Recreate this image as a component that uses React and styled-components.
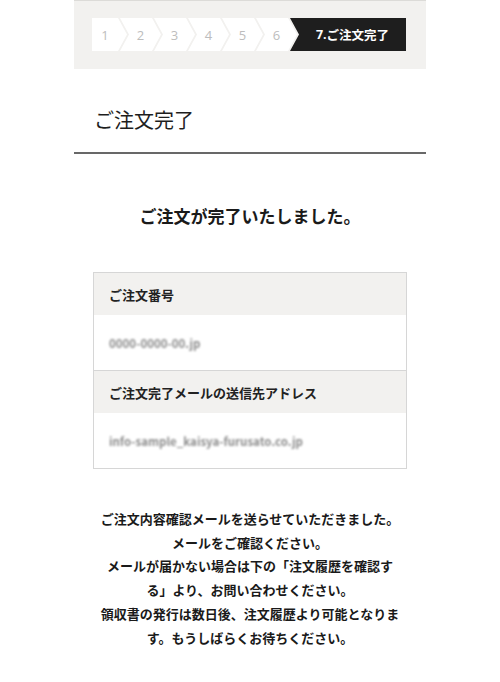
import React from 'react';
import styled, { createGlobalStyle } from 'styled-components';

const GlobalStyle = createGlobalStyle`
	body {
		margin: 0;
		background: #fff;
		font-family: "Noto Sans CJK JP", "Noto Sans", sans-serif;
		color: #222;
	}
`;

const Page = styled.main`
	width: 352px;
	margin: 0 auto;
	padding-bottom: 30px;
`;

const StepPanel = styled.nav`
	height: 69px;
	box-sizing: border-box;
	background: #f2f1ef;
	border-top: 1px solid #dcdbd8;
	padding: 17px 0 0 18px;
`;

const StepList = styled.ol`
	display: flex;
	margin: 0;
	padding: 0;
	list-style: none;
	height: 33px;
`;

const Step = styled.li`
	display: flex;
	align-items: center;
	justify-content: center;
	box-sizing: border-box;
	height: 100%;
	width: ${p => (p.$first ? 35 : p.$current ? 116 : 41)}px;
	margin-left: ${p => (p.$first ? 0 : -7)}px;
	padding: 0 ${p => (p.$current ? 0 : 9)}px 0 ${p => (p.$first ? 0 : 9)}px;
	background: ${p => (p.$current ? '#1e1e1e' : '#fff')};
	color: ${p => (p.$current ? '#fff' : '#bdbdbd')};
	font-family: "Open Sans", "Noto Sans CJK JP", sans-serif;
	font-size: ${p => (p.$current ? 12.5 : 13)}px;
	font-weight: ${p => (p.$current ? 700 : 400)};
	clip-path: ${p =>
		p.$first
			? 'polygon(0 0, calc(100% - 9px) 0, 100% 50%, calc(100% - 9px) 100%, 0 100%)'
			: p.$current
			? 'polygon(0 0, 100% 0, 100% 100%, 0 100%, 9px 50%)'
			: 'polygon(0 0, calc(100% - 9px) 0, 100% 50%, calc(100% - 9px) 100%, 0 100%, 9px 50%)'};

	span {
		font-family: "Noto Sans CJK JP", sans-serif;
	}
`;

const PageHeading = styled.h1`
	margin: 0;
	padding: 36px 20px 17px;
	font-size: 20px;
	line-height: 30px;
	font-weight: 400;
	color: #1e1e1e;
	border-bottom: 2px solid #686868;
`;

const Lead = styled.h2`
	margin: 50px 0 0;
	text-align: center;
	font-size: 17px;
	line-height: 24px;
	font-weight: 700;
	color: #1a1a1a;
`;

const InfoBox = styled.dl`
	margin: 44px 19px 0;
	border: 1px solid #d6d6d6;
`;

const InfoLabel = styled.dt`
	height: 42px;
	display: flex;
	align-items: center;
	padding: 0 15px;
	background: #f2f1ef;
	font-size: 13px;
	font-weight: 700;
	color: #222;
	border-top: ${p => (p.$divided ? '1px solid #d6d6d6' : 'none')};
`;

const InfoValue = styled.dd`
	margin: 0;
	height: ${p => p.$h}px;
	display: flex;
	align-items: center;
	padding: 0 15px;
	font-size: 11.5px;
	font-weight: 700;
	color: #8c8c8c;
	filter: blur(1.1px);
`;

const Notice = styled.p`
	margin: 38px 0 0;
	text-align: center;
	font-size: 13px;
	line-height: 23.7px;
	font-weight: 700;
	color: #1a1a1a;
`;

const steps = ['1', '2', '3', '4', '5', '6'];

const App = () => {
	return (
		<>
			<GlobalStyle />
			<Page>
				<StepPanel>
					<StepList>
						{steps.map((num, i) => (
							<Step key={num} $first={i === 0}>
								{num}
							</Step>
						))}
						<Step $current>
							7.<span>ご注文完了</span>
						</Step>
					</StepList>
				</StepPanel>

				<PageHeading>ご注文完了</PageHeading>

				<Lead>ご注文が完了いたしました。</Lead>

				<InfoBox>
					<InfoLabel>ご注文番号</InfoLabel>
					<InfoValue $h={55}>0000-0000-00.jp</InfoValue>
					<InfoLabel $divided>ご注文完了メールの送信先アドレス</InfoLabel>
					<InfoValue $h={55}>info-sample_kaisya-furusato.co.jp</InfoValue>
				</InfoBox>

				<Notice>
					ご注文内容確認メールを送らせていただきました。
					<br />
					メールをご確認ください。
					<br />
					メールが届かない場合は下の「注文履歴を確認す
					<br />
					る」より、お問い合わせください。
					<br />
					領収書の発行は数日後、注文履歴より可能となりま
					<br />
					す。もうしばらくお待ちください。
				</Notice>
			</Page>
		</>
	);
};

export default App;
